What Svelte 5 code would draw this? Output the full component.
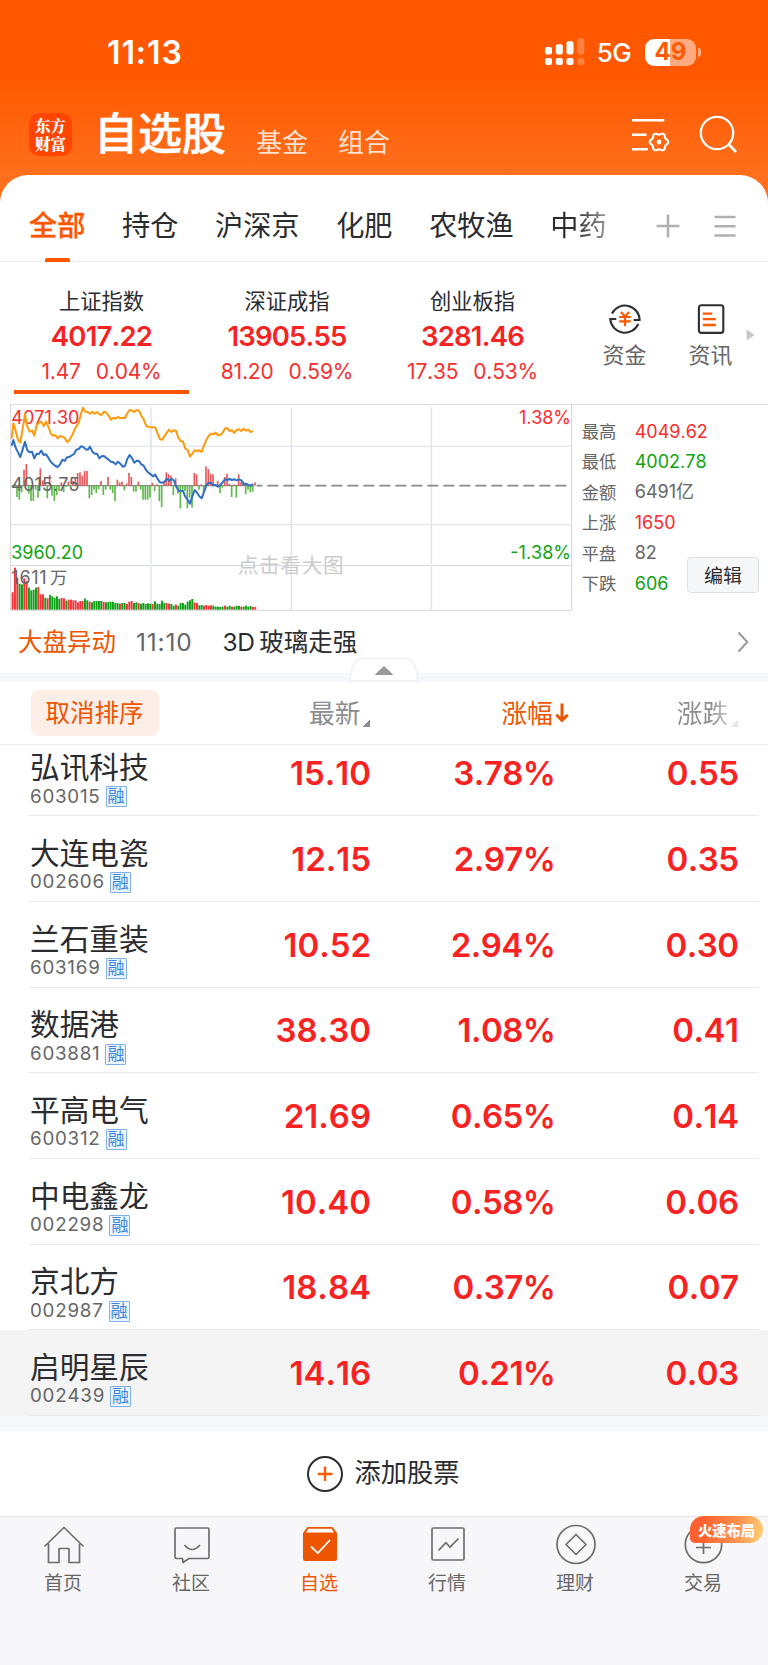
<script>
  const groups = [
    { name: '全部', active: true },
    { name: '持仓' },
    { name: '沪深京' },
    { name: '化肥' },
    { name: '农牧渔' },
    { name: '中药', faded: true }
  ];

  const indexes = [
    { name: '上证指数', value: '4017.22', change: '1.47', pct: '0.04%', active: true },
    { name: '深证成指', value: '13905.55', change: '81.20', pct: '0.59%' },
    { name: '创业板指', value: '3281.46', change: '17.35', pct: '0.53%' }
  ];

  const stats = [
    { label: '最高', value: '4049.62', tone: 'up' },
    { label: '最低', value: '4002.78', tone: 'down' },
    { label: '金额', value: '6491亿', tone: 'flat' },
    { label: '上涨', value: '1650', tone: 'up' },
    { label: '平盘', value: '82', tone: 'flat' },
    { label: '下跌', value: '606', tone: 'down' }
  ];

  const stocks = [
    { name: '弘讯科技', code: '603015', price: '15.10', pct: '3.78%', diff: '0.55' },
    { name: '大连电瓷', code: '002606', price: '12.15', pct: '2.97%', diff: '0.35' },
    { name: '兰石重装', code: '603169', price: '10.52', pct: '2.94%', diff: '0.30' },
    { name: '数据港', code: '603881', price: '38.30', pct: '1.08%', diff: '0.41' },
    { name: '平高电气', code: '600312', price: '21.69', pct: '0.65%', diff: '0.14' },
    { name: '中电鑫龙', code: '002298', price: '10.40', pct: '0.58%', diff: '0.06' },
    { name: '京北方', code: '002987', price: '18.84', pct: '0.37%', diff: '0.07' },
    { name: '启明星辰', code: '002439', price: '14.16', pct: '0.21%', diff: '0.03', pressed: true }
  ];

  const tabs = [
    { name: '首页', icon: 'home' },
    { name: '社区', icon: 'chat' },
    { name: '自选', icon: 'pick', active: true },
    { name: '行情', icon: 'market' },
    { name: '理财', icon: 'wealth' },
    { name: '交易', icon: 'trade', badge: '火速布局' }
  ];

  // Six-lobed gear outline centred on (27, 25).
  const gear = Array.from({ length: 72 }, (_, i) => {
    const a = (i * Math.PI) / 36;
    const r = 8.3 + 0.95 * Math.cos(6 * a);
    return `${(27 + r * Math.cos(a)).toFixed(2)},${(25 + r * Math.sin(a)).toFixed(2)}`;
  }).join(' ');

  // Chart values are in chart units: three units per pixel, zero line at 272.
  const STEP = 7;
  const barX = (i) => 35 + i * STEP;

  // Positive is a red bar above the zero line, negative a green bar below it.
  const momentum = [
    -5, 6, -34, -42, -20, 48, 65, -24, -46, -46, -12, -36, 52, 16, 6, -38, 32, -30, -46,
    -28, -16, 10, -20, -4, 12, -8, 14, 26, 38, 40, 30, 44, 44, -38, -28, -12, -22, -10, 14,
    -28, -12, 26, -12, -22, -46, 18, 10, 12, -14, 6, 38, 26, -18, -18, 12, -12, -42, -42,
    -42, -36, 8, -16, 4, -46, -64, 10, 40, 34, 30, -28, 22, -24, -68, -12, -16, -68, -36,
    -66, 38, 34, -12, 4, -22, 58, 50, 36, 34, 4, 14, -22, -6, 26, 36, 6, -34, 4, -36, 34,
    10, 12, -26, -12, -20, -18, 10
  ];

  const volume = [
    [52, 'r'], [126, 'r'], [96, 'r'], [78, 'g'], [76, 'g'], [94, 'r'], [86, 'r'], [66, 'g'],
    [58, 'g'], [60, 'g'], [66, 'g'], [68, 'r'], [46, 'r'], [46, 'r'], [36, 'g'], [34, 'r'],
    [44, 'g'], [40, 'g'], [36, 'g'], [40, 'g'], [32, 'g'], [35, 'r'], [34, 'r'], [27, 'g'],
    [30, 'r'], [30, 'r'], [28, 'r'], [28, 'r'], [22, 'r'], [26, 'r'], [26, 'r'], [33, 'g'],
    [28, 'g'], [24, 'r'], [22, 'g'], [26, 'g'], [26, 'g'], [26, 'g'], [26, 'g'], [24, 'r'],
    [22, 'g'], [23, 'g'], [24, 'g'], [24, 'g'], [20, 'g'], [20, 'g'], [18, 'r'], [20, 'g'],
    [20, 'g'], [17, 'r'], [24, 'r'], [26, 'r'], [20, 'g'], [22, 'g'], [20, 'r'], [17, 'g'],
    [20, 'g'], [17, 'g'], [19, 'g'], [18, 'g'], [17, 'r'], [25, 'g'], [18, 'g'], [17, 'g'],
    [27, 'g'], [20, 'g'], [20, 'r'], [18, 'r'], [17, 'g'], [12, 'g'], [15, 'r'], [12, 'g'],
    [20, 'g'], [20, 'g'], [15, 'g'], [24, 'g'], [28, 'g'], [32, 'g'], [22, 'r'], [20, 'r'],
    [13, 'g'], [14, 'g'], [12, 'r'], [14, 'r'], [12, 'r'], [13, 'r'], [12, 'g'], [9, 'g'],
    [9, 'g'], [8, 'g'], [9, 'g'], [12, 'r'], [9, 'g'], [12, 'g'], [9, 'r'], [9, 'g'], [12, 'g'],
    [11, 'g'], [9, 'r'], [9, 'g'], [12, 'g'], [9, 'g'], [11, 'g'], [8, 'r'], [8, 'r']
  ];

  const average =
    '35,130 40,85 47,108 54,135 61,143 68,100 75,58 82,95 89,110 96,106 103,122 110,90 117,83 124,80 131,93 138,80 145,95 152,115 159,122 166,120 173,130 180,123 187,125 194,128 201,141 208,136 215,124 222,108 229,94 236,84 243,56 249,38 256,50 263,51 270,56 277,50 284,56 291,51 298,58 305,60 312,50 319,53 326,62 333,74 340,68 347,71 354,66 361,69 375,69 382,54 389,45 396,47 403,51 410,45 417,47 424,62 431,73 438,91 445,96 459,97 466,98 473,116 480,133 487,134 494,122 501,112 507,104 514,111 521,106 528,107 535,128 542,138 549,140 556,161 563,165 570,185 577,176 584,166 591,168 598,166 605,171 612,151 619,135 626,123 633,116 640,118 647,113 654,121 661,119 668,113 675,100 682,100 689,108 696,106 703,114 710,105 717,103 724,108 731,101 738,107 745,104 752,111 759,108';

  const price =
    '35,152 40,135 47,158 54,172 61,186 68,163 75,140 82,166 89,172 96,170 103,190 110,176 117,177 124,167 131,180 138,178 145,188 152,200 159,207 166,213 173,216 180,209 187,194 194,198 201,187 208,186 215,181 222,177 229,164 236,162 243,154 250,156 257,163 264,164 270,155 277,170 284,176 291,176 298,190 305,184 312,183 319,189 326,194 333,200 340,202 347,208 354,200 361,206 368,215 375,213 382,192 389,180 396,190 403,203 410,197 417,198 424,208 431,212 438,225 445,233 452,238 459,244 466,239 473,252 480,262 487,263 494,260 501,251 508,257 515,251 522,257 529,276 536,287 549,288 556,305 563,314 570,326 577,304 584,285 591,293 598,304 605,310 612,291 619,271 626,263 633,264 640,271 647,270 654,275 661,270 668,262 675,253 682,255 689,252 696,255 703,253 710,256 717,253 724,256 731,268 738,266 745,270 752,272 759,267';
</script>

<div class="app">
  <header>
    <div class="status">
      <span class="time">11:13</span>
      <div class="status-right">
        <svg class="signal" width="40" height="28" viewBox="0 0 40 28" fill="#fff">
          <rect x="0" y="9" width="7" height="7.5" rx="2" />
          <rect x="0" y="20" width="7" height="7" rx="2" />
          <rect x="10.8" y="6.3" width="7" height="10.2" rx="2" />
          <rect x="10.8" y="20" width="7" height="7" rx="2" />
          <rect x="21.5" y="3.2" width="7" height="13.3" rx="2" />
          <rect x="21.5" y="20" width="7" height="7" rx="2" />
          <rect x="32.3" y="0.3" width="7" height="16.2" rx="2" opacity=".25" />
          <rect x="32.3" y="20" width="7" height="7" rx="2" opacity=".25" />
        </svg>
        <span class="net">5G</span>
        <div class="battery"><span class="four">4</span><span class="nine">9</span></div>
        <i class="nub"></i>
      </div>
    </div>
    <div class="nav">
      <div class="logo"><span>东方</span><span>财富</span></div>
      <h1>自选股</h1>
      <span class="sub">基金</span>
      <span class="sub second">组合</span>
      <div class="tools">
        <svg width="40" height="36" viewBox="0 0 40 36" fill="none" stroke="#fff" stroke-width="2.6">
          <path d="M0 3.2h32.3M0 17.8h14.5M0 32.2h15.8" />
          <polygon points={gear} stroke-width="2.2" stroke-linejoin="round" />
          <circle cx="27" cy="25" r="2.4" fill="#fff" stroke="none" />
        </svg>
        <svg width="40" height="40" viewBox="0 0 40 40" fill="none" stroke="#fff" stroke-width="2.3">
          <circle cx="18" cy="18" r="16.2" />
          <path stroke-width="2.8" d="M29.2 28.8l7.8 8.2" />
        </svg>
      </div>
    </div>
  </header>

  <main>
    <nav class="groups">
      {#each groups as g}
        <span class="group" class:active={g.active} class:faded={g.faded}>{g.name}</span>
      {/each}
      <svg class="plus" width="24" height="24" viewBox="0 0 24 24" stroke="#b0b0b0" stroke-width="2.6">
        <path d="M.5 12h23M12 .5v23" />
      </svg>
      <svg class="burger" width="22" height="22" viewBox="0 0 22 22" stroke="#b0b0b0" stroke-width="2.6" stroke-linecap="round">
        <path d="M1.5 2h19M1.5 11.2h19M1.5 20.5h19" />
      </svg>
    </nav>

    <section class="indexes">
      {#each indexes as x}
        <div class="index" class:active={x.active}>
          <span class="iname">{x.name}</span>
          <strong>{x.value}</strong>
          <span class="delta"><span>{x.change}</span><span>{x.pct}</span></span>
        </div>
      {/each}
      <div class="shortcut">
        <svg width="34" height="34" viewBox="0 0 34 34" fill="none" stroke="#2d2f33" stroke-width="2.1">
          <path d="M4 11.5A14.6 14.6 0 0 1 31.6 18h-6" />
          <path d="M30.3 21.8A14.6 14.6 0 0 1 2.3 17h6" />
          <path stroke="#ff5a00" stroke-width="2.2" d="M12.8 10l4.2 4.4 4.2-4.4M11.2 15h11.6M11.2 19.4h11.6M17 14.4v9.8" />
        </svg>
        <span>资金</span>
      </div>
      <div class="shortcut news">
        <svg width="34" height="34" viewBox="0 0 34 34" fill="none" stroke="#2d2f33" stroke-width="2.1">
          <rect x="4.9" y="3.3" width="24.4" height="27.6" rx="2.4" />
          <path stroke="#ff5a00" stroke-width="2.3" d="M8.8 11.7h9.5M8.8 17.2h13M8.8 23h13" />
        </svg>
        <span>资讯</span>
      </div>
      <svg class="more" width="9" height="12" viewBox="0 0 9 12"><path d="M.6.4 8.7 6 .6 11.6z" fill="#c8c8c8" /></svg>
    </section>

    <section class="board">
      <svg class="chart" width="562.67" height="207" viewBox="30 27 1688 621">
        <g stroke="#e3e5ee" fill="none">
          <path stroke-width="4" d="M30 154H1715M30 389H1715" />
          <path stroke-width="5" d="M453 37V506M453 516V645M874 37V506M874 516V645M1294 37V506M1294 516V645" />
          <path stroke-width="4" stroke="#dcdee5" d="M30 512H1715" />
          <path stroke-width="3" stroke="#d3d5dd" d="M32 30V646H1715V30" />
        </g>
        <path d="M36 272H762" stroke="#888" stroke-width="4" />
        <path d="M770 272H1708" stroke="#888" stroke-width="5" stroke-dasharray="33 15" stroke-dashoffset="16" />
        {#each momentum as m, i}
          <rect
            x={barX(i) - 0.5}
            y={m > 0 ? 272 - m : 272}
            width="5"
            height={Math.abs(m)}
            fill={m > 0 ? '#e8575b' : '#5cb94a'}
          />
        {/each}
        {#each volume as [h, tone], i}
          <rect x={barX(i)} y={644 - h} width="5.8" height={h} fill={tone === 'r' ? '#f5323a' : '#0d9f16'} />
        {/each}
        <g font-size="54" font-weight="400" fill="#666">
          <text x="34" y="86" fill="#fb2b2b" textLength="204">4071.30</text>
          <text x="34" y="289" textLength="204">4015.75</text>
          <text x="34" y="491" fill="#0fa30f" textLength="215">3960.20</text>
          <text x="34" y="568" textLength="106">1611</text>
          <text x="150" y="568" font-size="52">万</text>
          <text x="1713" y="86" fill="#fb2b2b" text-anchor="end" textLength="156">1.38%</text>
          <text x="1713" y="491" fill="#0fa30f" text-anchor="end" textLength="182">-1.38%</text>
          <text x="713" y="534" fill="#ccc" font-size="62" textLength="318">点击看大图</text>
        </g>
        <polyline points={average} fill="none" stroke="#ff9a0c" stroke-width="6" stroke-linejoin="round" />
        <polyline points={price} fill="none" stroke="#2f6fc4" stroke-width="6" stroke-linejoin="round" />
      </svg>
      <div class="stats">
        {#each stats as s}
          <div class="stat"><span>{s.label}</span><b class={s.tone}>{s.value}</b></div>
        {/each}
        <button class="edit">编辑</button>
      </div>
    </section>

    <section class="notice">
      <span class="topic">大盘异动</span>
      <span class="when">11:10</span>
      <span class="headline"><i>3D</i>玻璃走强</span>
      <svg width="12" height="22" viewBox="0 0 12 22" fill="none" stroke="#999" stroke-width="2"><path d="M1.5 1.5 10.3 11 1.5 20.5" /></svg>
    </section>

    <div class="divider">
      <svg class="handle" width="70" height="25" viewBox="0 0 70 25">
        <path d="M1 24C3 8 5 1.5 14 1.5H56C65 1.5 67 8 69 24z" fill="#fff" stroke="#eeeff1" stroke-width="1.3" />
        <path d="M26.5 17.5 35 9.5 43.5 17.5z" fill="#999" stroke="#999" stroke-linejoin="round" />
      </svg>
    </div>

    <section class="thead">
      <span class="reset">取消排序</span>
      <span class="col latest">最新<i></i></span>
      <span class="col sorted">涨幅<svg width="14" height="20" viewBox="0 0 14 20" fill="none" stroke="#ee5500" stroke-width="3"><path d="M7 .5V17M1.3 11.8 7 17.5l5.7-5.7" /></svg></span>
      <span class="col change">涨跌<i></i></span>
    </section>

    <section class="rows">
      {#each stocks as s}
        <div class="row" class:pressed={s.pressed}>
          <div class="who">
            <span class="sname">{s.name}</span>
            <span class="code">{s.code}<em>融</em></span>
          </div>
          <b>{s.price}</b>
          <b>{s.pct}</b>
          <b>{s.diff}</b>
        </div>
      {/each}
    </section>

    <div class="gap"></div>

    <section class="add">
      <svg width="36" height="36" viewBox="0 0 36 36" fill="none" stroke="#2b2c30" stroke-width="2">
        <circle cx="18" cy="18" r="17" />
        <path stroke="#ff5a00" stroke-width="2.4" d="M10.8 18h14.6M18 10.5V25" />
      </svg>
      <span>添加股票</span>
    </section>
  </main>

  <footer>
    {#each tabs as t}
      <div class="tab" class:active={t.active}>
        <svg width="42" height="42" viewBox="0 0 42 42" fill="none" stroke="#6e6e72" stroke-width="1.7" stroke-linejoin="round">
          {#if t.icon === 'home'}
            <path d="M1.5 22.5 21 3.5l19.500 19M5.5 19.5V38.5H16V24.5H26V38.5H36.5V19.5" />
          {:else if t.icon === 'chat'}
            <path d="M5.5 4H36.5Q38 4 38 5.5V33Q38 34.5 36.5 34.5H18L12 38.5 11.5 34.5H5.5Q4 34.5 4 33V5.5Q4 4 5.5 4z" />
            <path d="M13.5 21q7.5 9 15.5 0" />
          {:else if t.icon === 'pick'}
            <path d="M8.5 3H33.5L38 9V34.5Q38 37 35.5 37H6.5Q4 37 4 34.5V9z" fill="#ee5500" stroke="none" />
            <path d="M9.5 4.7H32.5L35 8.6H7z" fill="#fff" stroke="none" />
            <path d="M12 22.5l6.8 6.6L31 16" stroke="#fff" stroke-width="1.8" />
          {:else if t.icon === 'market'}
            <rect x="5" y="4" width="32" height="32" rx="1.2" />
            <path d="M11.5 26.5 19 18.7l4 4.5 8.5-8.7" />
          {:else if t.icon === 'wealth'}
            <circle cx="21" cy="20.5" r="19" />
            <path d="M21 10.5 31 20.5 21 30.5 11 20.5z" />
          {:else}
            <circle cx="20.5" cy="20.5" r="18.2" />
            <path d="M13 17.5h15M13 23.5h15M20.5 13v17M15.500 10l5 5 5-5" />
          {/if}
        </svg>
        <span>{t.name}</span>
        {#if t.badge}<em class="hot">{t.badge}</em>{/if}
      </div>
    {/each}
  </footer>
</div>

<style>
  :global(body) {
    background: #f7f7fa;
  }
  .app {
    width: 768px;
    height: 1665px;
    overflow: hidden;
    display: flex;
    flex-direction: column;
    background: linear-gradient(#ff5800 0, #ff5800 75px, #ff6f1c 175px, #ff6f1c 240px, #f7f7fa 240px);
    font-family: Inter, 'Noto Sans CJK SC', sans-serif;
    font-weight: 400;
    font-kerning: none;
    color: #2b2c30;
    white-space: nowrap;
    line-height: 1;
  }
  i,
  em {
    font-style: normal;
  }
  header {
    height: 175px;
    flex: none;
    color: #fff;
  }
  .status {
    display: flex;
    justify-content: space-between;
    align-items: center;
    height: 104px;
    padding: 0 67px 0 107px;
  }
  .time {
    font-size: 32px;
    font-weight: 600;
    letter-spacing: 0.9px;
    padding-top: 2px;
  }
  .status-right {
    display: flex;
    align-items: center;
  }
  .net {
    font-size: 26px;
    font-weight: 500;
    letter-spacing: -0.6px;
    margin: 2px 14px 0 12px;
  }
  .battery {
    width: 51px;
    height: 27px;
    border-radius: 9px;
    background: linear-gradient(90deg, #fff 25px, #ffab80 25px);
    display: flex;
    justify-content: center;
    align-items: center;
    font-size: 24px;
    font-weight: 700;
    color: #ff5a05;
  }
  .nub {
    width: 3px;
    height: 9px;
    margin-left: 2px;
    border-radius: 0 4px 4px 0;
    background: #ffab80;
  }
  .nav {
    display: flex;
    align-items: center;
    height: 61px;
    padding-left: 29px;
  }
  .logo {
    width: 43px;
    height: 43px;
    border-radius: 10px;
    background: #ff4500;
    display: flex;
    flex-direction: column;
    align-items: center;
    justify-content: center;
    gap: 1px;
    font: 900 15.5px/17px 'Noto Serif CJK SC', 'Noto Sans CJK SC', serif;
  }
  h1 {
    margin: -2px 0 0 22px;
    font-size: 44px;
    font-weight: 500;
    -webkit-text-stroke: 0.5px #fff;
  }
  .sub {
    margin: 16px 0 0 30px;
    font-size: 26px;
    color: #ffe2d2;
  }
  .tools {
    margin-left: auto;
    display: flex;
    align-items: center;
    gap: 27px;
    padding-right: 29px;
  }
  main {
    flex: none;
    height: 1341px;
    display: flex;
    flex-direction: column;
    border-radius: 28px 28px 0 0;
    background: #fff;
    overflow: hidden;
  }
  .groups {
    height: 87px;
    flex: none;
    box-sizing: border-box;
    border-bottom: 1.5px solid #ededf0;
    display: flex;
    align-items: stretch;
    padding-left: 29px;
    font-size: 28.2px;
  }
  .group {
    margin-right: 36.6px;
    line-height: 103px;
    position: relative;
  }
  .active.group {
    color: #ff5500;
    font-weight: 500;
    -webkit-text-stroke: 0.3px #ff5500;
  }
  .active.group::after {
    content: '';
    position: absolute;
    left: 16px;
    width: 25px;
    bottom: -1px;
    height: 4px;
    border-radius: 2px 2px 0 0;
    background: #ff5500;
  }
  .faded {
    background: linear-gradient(90deg, #2b2c30 45%, #999 100%);
    background-clip: text;
    -webkit-background-clip: text;
    color: transparent;
  }
  .plus {
    margin: 39px 0 0 13px;
  }
  .burger {
    margin: 39.5px 0 0 34px;
  }
  .indexes {
    height: 142px;
    flex: none;
    display: flex;
    padding-left: 14px;
  }
  .index {
    width: 175px;
    box-sizing: border-box;
    margin-right: 10.5px;
    height: 132px;
    display: flex;
    flex-direction: column;
    align-items: center;
    padding-top: 29px;
  }
  .index.active {
    border-bottom: 4px solid #ff5500;
  }
  .iname {
    font-size: 21.3px;
  }
  .index strong {
    margin-top: 10.5px;
    font-size: 27.5px;
    font-weight: 600;
    letter-spacing: -0.8px;
    color: #f92222;
  }
  .delta {
    display: flex;
    gap: 15px;
    margin-top: 10.5px;
    font-size: 21px;
    color: #f83030;
    letter-spacing: -0.2px;
  }
  .shortcut {
    width: 44px;
    display: flex;
    flex-direction: column;
    align-items: center;
    margin: 40px 0 0 32px;
    font-size: 22px;
    color: #666;
    gap: 8px;
  }
  .news {
    margin-left: 42px;
  }
  .more {
    margin: 67px 0 0 13px;
  }
  .board {
    height: 207px;
    flex: none;
    margin-left: 10px;
    display: flex;
    position: relative;
    border-top: 1.5px solid #dcdde4;
    margin-bottom: -1px;
    box-sizing: border-box;
  }
  .chart {
    flex: none;
    margin-top: -1px;
  }
  .stats {
    flex: 1;
    padding: 11.5px 0 0 9px;
  }
  .stat {
    height: 30.4px;
    display: flex;
    align-items: center;
    font-size: 17.3px;
    color: #666;
  }
  .stat b {
    margin-left: 18.5px;
    font-weight: 400;
    font-size: 18px;
    letter-spacing: 0;
  }
  .stat b.up {
    color: #fb2b2b;
  }
  .stat b.down {
    color: #0fa30f;
  }
  .edit {
    position: absolute;
    right: 9px;
    top: 152px;
    width: 72px;
    height: 36px;
    padding: 0 0 2px;
    border: 1px solid #e0e1e5;
    border-radius: 4px;
    background: #f6f7f9;
    color: #2b2c30;
    font: 400 19px 'Noto Sans CJK SC', sans-serif;
  }
  .notice {
    height: 63px;
    flex: none;
    box-sizing: border-box;
    display: flex;
    align-items: center;
    padding: 1px 19px 0 18px;
    font-size: 24.5px;
  }
  .topic {
    color: #ee5500;
  }
  .when {
    margin-left: 20px;
    color: #666;
    font-size: 24.5px;
    letter-spacing: 0.8px;
  }
  .headline {
    margin-left: 30px;
  }
  .headline i {
    margin-right: 4.5px;
    letter-spacing: -0.3px;
  }
  .notice svg {
    margin-left: auto;
  }
  .divider {
    height: 9px;
    flex: none;
    background: #f6f7fa;
    position: relative;
  }
  .handle {
    position: absolute;
    left: 349px;
    top: -16px;
  }
  .thead {
    height: 63px;
    flex: none;
    box-sizing: border-box;
    border-bottom: 1.5px solid #ebebee;
    display: flex;
    align-items: center;
    padding-left: 31px;
    font-size: 25.7px;
    color: #8c8c8f;
  }
  .reset {
    width: 128px;
    height: 46px;
    border-radius: 8px;
    background: #fdeee8;
    color: #ee5500;
    font-size: 24.5px;
    line-height: 46px;
    text-align: center;
    text-indent: -1px;
  }
  .col {
    display: flex;
    align-items: center;
    padding-top: 1px;
  }
  .col i {
    width: 7px;
    height: 7px;
    margin: 20px 0 0 3px;
    background: linear-gradient(135deg, transparent 50%, #8c8c8f 50%);
  }
  .latest {
    margin-left: 150px;
  }
  .sorted {
    margin-left: 131px;
    color: #ee5500;
  }
  .sorted svg {
    margin: -1px 0 0 2px;
  }
  .change {
    margin-left: 108px;
    background: linear-gradient(90deg, #8c8c8f 55%, #d8d8d8 90%);
    background-clip: text;
    -webkit-background-clip: text;
    color: transparent;
  }
  .change i {
    background: linear-gradient(135deg, transparent 50%, #e6e6e6 50%);
  }
  .rows {
    height: 671px;
    flex: none;
    display: flex;
    flex-direction: column;
    justify-content: flex-end;
    overflow: hidden;
  }
  .row {
    height: 85.7px;
    flex: none;
    box-sizing: border-box;
    display: grid;
    grid-template-columns: 341px 184.5px 183px;
    align-items: center;
    padding-left: 30px;
    position: relative;
  }
  .row::after {
    content: '';
    position: absolute;
    left: 29px;
    right: 9px;
    bottom: 0;
    height: 1px;
    background: #e9e9ec;
  }
  .who {
    grid-column: 1;
    grid-row: 1;
    display: flex;
    flex-direction: column;
    padding-top: 14.5px;
  }
  .sname {
    font-size: 29.7px;
  }
  .code {
    display: flex;
    align-items: center;
    height: 22px;
    margin-top: 3px;
    font-size: 18.8px;
    letter-spacing: 0.75px;
    color: #666;
  }
  .code em {
    margin-left: 5px;
    width: 19px;
    height: 19px;
    border: 1px solid #7fb0ea;
    border-radius: 1px;
    background: #edf5fd;
    color: #3b86da;
    font-size: 17px;
    letter-spacing: 0;
    line-height: 18px;
    text-align: center;
  }
  .row b {
    grid-row: 1;
    justify-self: end;
    font-size: 33px;
    font-weight: 600;
    letter-spacing: -0.5px;
    color: #f92222;
    padding-top: 1px;
  }
  .row b:nth-of-type(1) {
    grid-column: 1;
    letter-spacing: 0;
  }
  .pressed {
    background: #f4f4f4;
  }
  .gap {
    height: 15px;
    flex: none;
    background: #f6f8fa;
  }
  .add {
    height: 85px;
    flex: none;
    display: flex;
    align-items: center;
    justify-content: center;
    gap: 11px;
    font-size: 26.3px;
    padding-right: 1px;
    box-sizing: border-box;
  }
  footer {
    flex: 1;
    box-sizing: border-box;
    border-top: 1.5px solid #e8e8eb;
    background: #f7f7fa;
    display: flex;
  }
  .tab {
    width: 128px;
    display: flex;
    flex-direction: column;
    align-items: center;
    padding-top: 7px;
    position: relative;
    font-size: 19px;
    color: #666;
    gap: 7.5px;
  }
  .tab > span {
    padding-right: 2px;
  }
  .tab.active {
    color: #ee5500;
  }
  .hot {
    position: absolute;
    left: 50px;
    top: -1px;
    width: 73px;
    height: 27px;
    border-radius: 14px 14px 14px 5px;
    background: linear-gradient(100deg, #ff6230 20%, #ff9350 65%, #ffd277);
    color: #fff;
    font: 900 14.3px/27px 'Noto Sans CJK SC', sans-serif;
    text-align: center;
  }
</style>
